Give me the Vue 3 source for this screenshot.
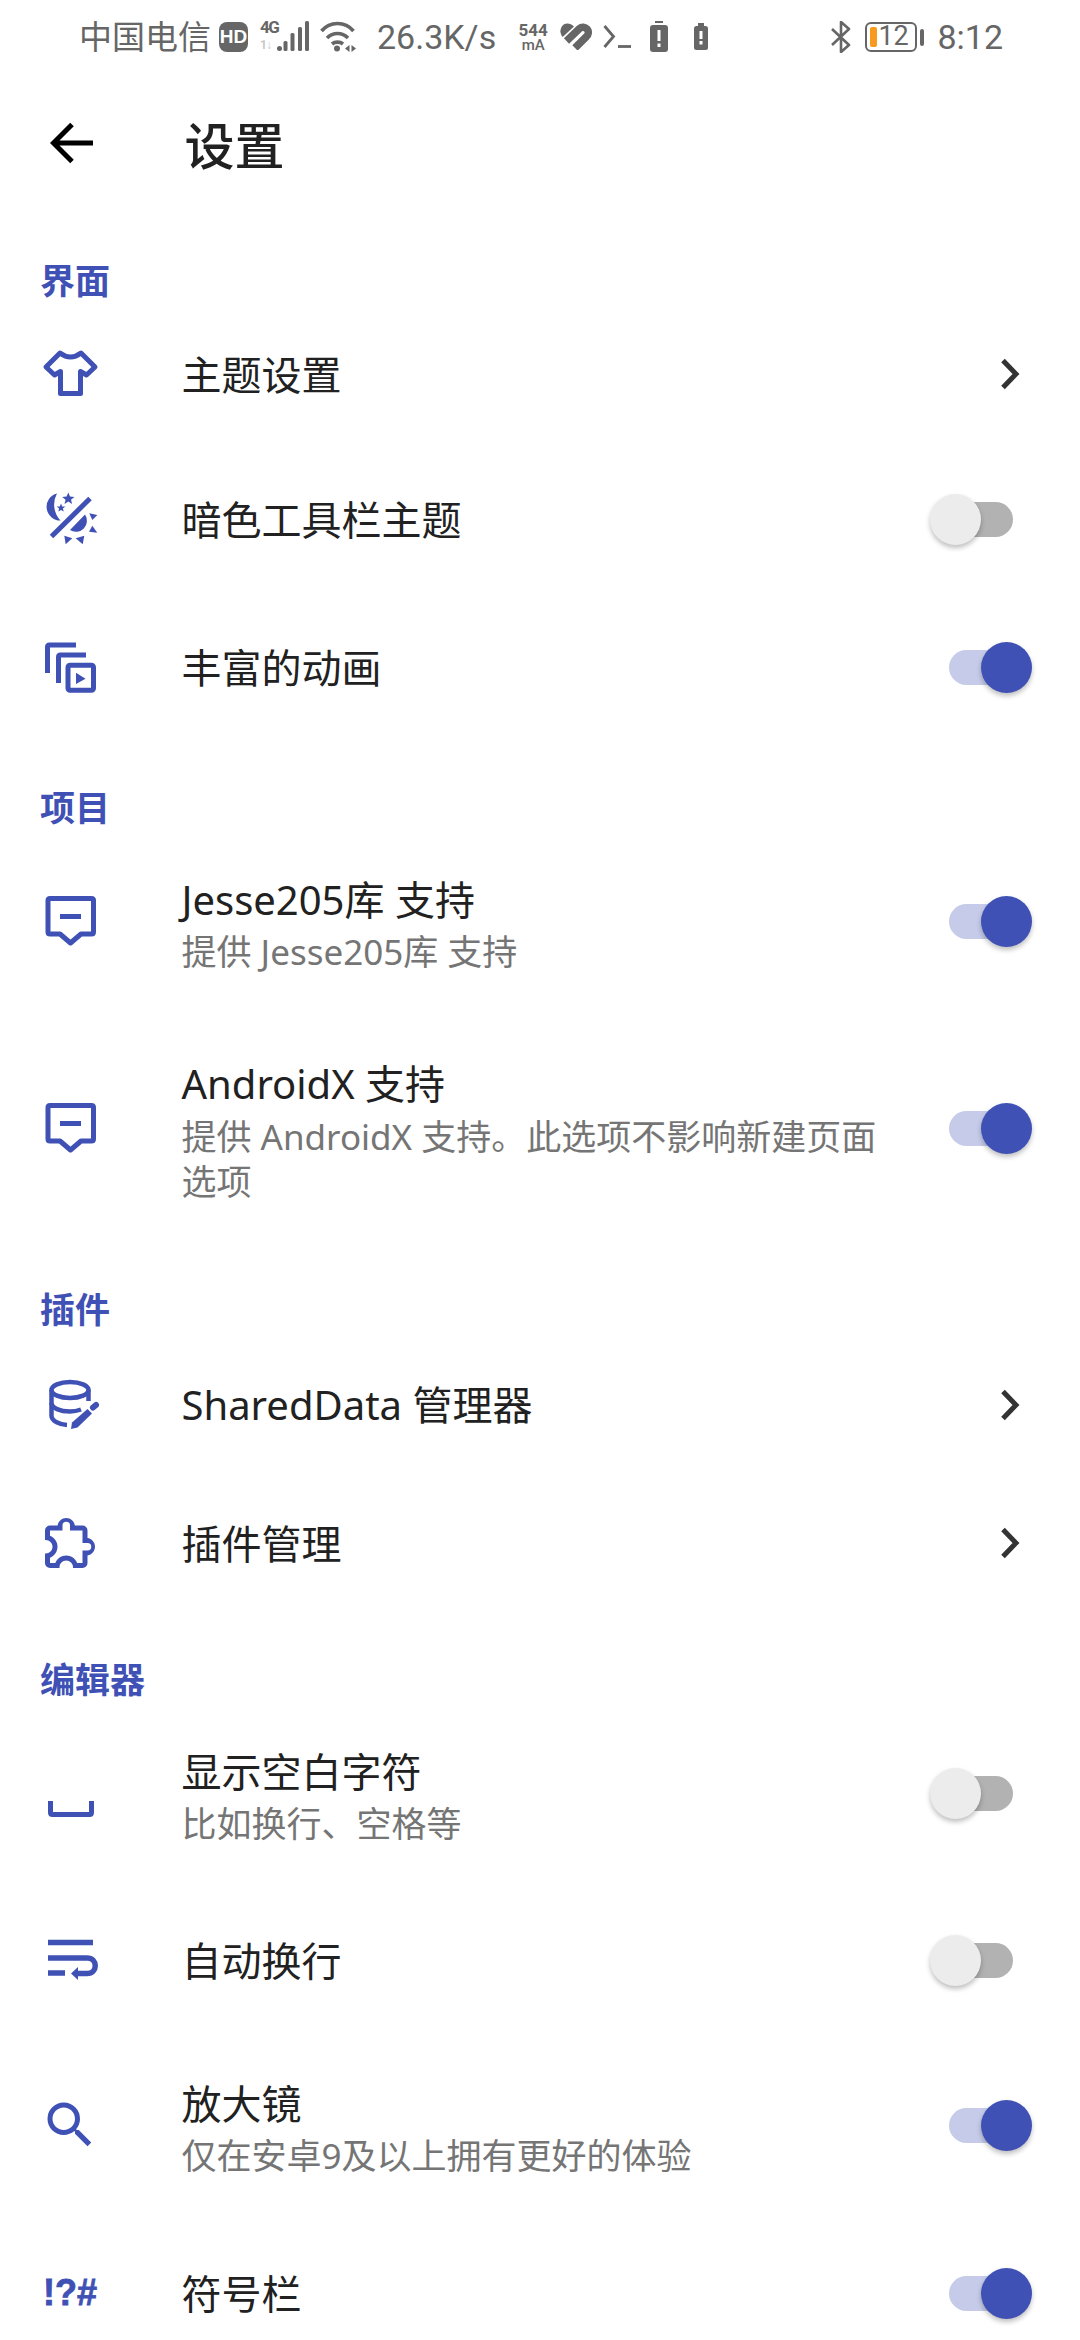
<script setup>
const sections = [
  { label: '界面', gap: 47, rows: [
    { icon: 'tee', title: '主题设置', ctl: 'chev', h: 142 },
    { icon: 'moon', title: '暗色工具栏主题', ctl: 'off', h: 148 },
    { icon: 'anim', title: '丰富的动画', ctl: 'on', h: 148 },
  ] },
  { label: '项目', gap: 45, rows: [
    { icon: 'msg', title: 'Jesse205库 支持', sub: '提供 Jesse205库 支持', ctl: 'on', h: 182 },
    { icon: 'msg', title: 'AndroidX 支持', sub: '提供 AndroidX 支持。此选项不影响新建页面选项', ctl: 'on', h: 232 },
  ] },
  { label: '插件', gap: 44, rows: [
    { icon: 'db', title: 'SharedData 管理器', ctl: 'chev', h: 145 },
    { icon: 'puzzle', title: '插件管理', ctl: 'chev', h: 132 },
  ] },
  { label: '编辑器', gap: 49, rows: [
    { icon: 'space', title: '显示空白字符', sub: '比如换行、空格等', ctl: 'off', h: 182 },
    { icon: 'wrap', title: '自动换行', ctl: 'off', h: 152 },
    { icon: 'search', title: '放大镜', sub: '仅在安卓9及以上拥有更好的体验', ctl: 'on', h: 178 },
    { icon: 'symbol', title: '符号栏', ctl: 'on', h: 158 },
  ] },
]
</script>

<template>
  <div class="page">
    <div class="status">
      <span class="carrier">中国电信</span>
      <span class="hd">HD</span>
      <div class="net">
        <span class="four">4G</span>
        <span class="one">1↓</span>
      </div>
      <svg class="s-signal" width="32" height="32" viewBox="0 0 32 32">
        <g fill="#666">
          <circle cx="2.500" cy="27.500" r="2.500" />
          <rect x="6.500" y="20" width="4" height="10" rx="1.500" />
          <rect x="13.500" y="12" width="4" height="18" rx="1.500" />
          <rect x="21" y="6" width="4" height="24" rx="1.500" />
          <rect x="28" y="0" width="4" height="30" rx="1.500" />
        </g>
      </svg>
      <svg class="s-wifi" width="37" height="32" viewBox="0 0 37 32">
        <g fill="none" stroke="#666" stroke-width="3.600">
          <path d="M1.500 10C10 0 25 0 33.500 10" />
          <path d="M7 17C13 11 22 11 28 17" />
          <path d="M12 23C15 20.500 20 20.500 23 23" />
        </g>
        <circle cx="17" cy="27.500" r="3" fill="#666" />
        <path d="M29.500 24V31L25 27.500ZM31.500 24V31L36 27.500Z" fill="#666" />
      </svg>
      <span class="speed">26.3K/s</span>
      <div class="ma">
        <span class="ma-n">544</span>
        <span class="ma-u">mA</span>
      </div>
      <svg class="s-heart" width="32" height="28" viewBox="0 0 32 28">
        <path d="M2.700 15L14 4.500C10 .5 4 .5 1.500 5-.5 9 .5 12.500 2.700 15Z" fill="#666" />
        <path d="M6.500 19L19.500 6.500A5 5 0 0 1 26.500 14.500L15 26" fill="none" stroke="#666" stroke-width="7.500" />
      </svg>
      <svg class="s-term" width="28" height="24" viewBox="0 0 28 24">
        <path d="M1.500 1l9 10.500-9 10.500" fill="none" stroke="#666" stroke-width="2.800" />
        <path d="M15 21.500h13" stroke="#666" stroke-width="2.800" />
      </svg>
      <svg class="s-bat1" width="18" height="32" viewBox="0 0 18 32">
        <rect x="5" y="0" width="8" height="2" fill="#666" />
        <rect x="0" y="4" width="18" height="27" rx="3" fill="#666" />
        <rect x="7.500" y="9" width="3" height="11" fill="#fff" />
        <rect x="7.500" y="22.500" width="3" height="3.500" fill="#fff" />
      </svg>
      <svg class="s-bat2" width="14" height="28" viewBox="0 0 14 28">
        <rect x="4" y="0" width="6" height="3" fill="#666" />
        <rect x="0" y="3" width="14" height="24" rx="2.500" fill="#666" />
        <rect x="5.500" y="8" width="3" height="8" fill="#fff" />
        <rect x="5.500" y="18" width="3" height="3.500" fill="#fff" />
      </svg>
      <div class="spacer"></div>
      <svg class="s-bt" width="20" height="32" viewBox="0 0 20 32">
        <path d="M1 8l17 16-8 7V1l8 7L1 24" fill="none" stroke="#666" stroke-width="2.600" stroke-linejoin="round" />
      </svg>
      <div class="batt">
        <span class="batt-fill"></span>
        <span class="batt-num">12</span>
      </div>
      <span class="batt-cap"></span>
      <span class="clock">8:12</span>
    </div>

    <div class="toolbar">
      <svg class="back" width="44" height="44" viewBox="0 0 44 44">
        <path d="M43 22H4M22 3.500L3.500 22 22 40.500" fill="none" stroke="#000" stroke-width="5" />
      </svg>
      <span class="title">设置</span>
    </div>

    <section v-for="s in sections" :key="s.label">
      <div class="label" :style="{ marginTop: s.gap + 'px' }">{{ s.label }}</div>
      <div v-for="r in s.rows" :key="r.title" class="row" :style="{ height: r.h + 'px' }">
        <div class="icon">
          <svg v-if="r.icon === 'tee'" width="60" height="60" viewBox="0 0 60 60">
            <path d="M20 9Q30.500 17 41 9L55 23 46.500 31 40.500 27.500V49.500H20.500V27.500L14.500 31 6 23Z" fill="none" stroke="#3f51b5" stroke-width="5" stroke-linejoin="round" />
          </svg>
          <svg v-else-if="r.icon === 'moon'" width="60" height="60" viewBox="0 0 60 60">
            <g fill="#3f51b5">
              <path d="M17 4.500A13.700 13.700 0 0 0 20.500 31.500 23 23 0 0 1 17 4.500Z" />
              <path d="M28.300 3.500l1.700 4.100 4.400.3-3.400 2.800 1.100 4.300-3.800-2.400-3.800 2.400 1.100-4.300-3.400-2.800 4.400-.3Z" />
              <path d="M21 14.500l1.200 2.900 3.100.2-2.400 2 .8 3-2.700-1.700-2.700 1.700.8-3-2.400-2 3.100-.2Z" />
              <path d="M30 41L45 25.500A11 11 0 0 1 30 41Z" />
              <path d="M49.300 24.300L57.300 26 52.300 31Z" />
              <path d="M52.300 36.700L57.300 43.700 49 42.700Z" />
              <path d="M35.700 49.300L44.300 46.700 42.700 55.300Z" />
              <path d="M24.300 46.700L32.300 49.300 25.700 55.300Z" />
            </g>
            <path d="M50 9.500L11.500 47.500" stroke="#3f51b5" stroke-width="5" />
          </svg>
          <svg v-else-if="r.icon === 'anim'" width="60" height="60" viewBox="0 0 60 60">
            <g fill="none" stroke="#3f51b5" stroke-width="5">
              <path d="M7.500 36V10Q7.500 8 9.500 8H36" />
              <path d="M18.500 46V20Q18.500 18 20.500 18H46" />
              <rect x="28" y="28.200" width="25.500" height="25" rx="2" />
            </g>
            <path d="M36 35.700L45.500 41.700 36 47Z" fill="#3f51b5" />
          </svg>
          <svg v-else-if="r.icon === 'msg'" width="60" height="60" viewBox="0 0 60 60">
            <path d="M10 7.500H51.500Q53.500 7.500 53.500 9.500V41Q53.500 43 51.500 43H41L30.500 52 20 43H10Q8 43 8 41V9.500Q8 7.500 10 7.500Z" fill="none" stroke="#3f51b5" stroke-width="5" stroke-linejoin="round" />
            <rect x="20" y="23" width="21" height="5" fill="#3f51b5" />
          </svg>
          <svg v-else-if="r.icon === 'db'" width="60" height="60" viewBox="0 0 60 60">
            <g fill="none" stroke="#3f51b5" stroke-width="4.500">
              <ellipse cx="30" cy="15" rx="18.500" ry="8" />
              <path d="M11.500 15V41C11.500 46 20 49.500 27 50" />
              <path d="M11.500 28C11.500 33 20 36.500 30 36.500 34 36.500 37 36 41 34.500" />
              <path d="M48.500 15V26" />
            </g>
            <path d="M31 54l1-6.500L47.500 34l4.500 4.500L37.500 52.500Z" fill="#3f51b5" />
            <path d="M53 32.500l3 -2.500" stroke="#3f51b5" stroke-width="6" stroke-linecap="round" />
          </svg>
          <svg v-else-if="r.icon === 'puzzle'" width="60" height="60" viewBox="0 0 24 24">
            <path fill="#3f51b5" d="M22,13.5C22,15.26 20.7,16.72 19,16.96V20A2,2 0 0,1 17,22H13.2V21.7A2.7,2.7 0 0,0 10.5,19C9,19 7.8,20.21 7.8,21.7V22H4A2,2 0 0,1 2,20V16.2H2.3C3.79,16.2 5,15 5,13.5C5,12 3.79,10.8 2.3,10.8H2V7A2,2 0 0,1 4,5H7.04C7.28,3.3 8.74,2 10.5,2C12.26,2 13.72,3.3 13.96,5H17A2,2 0 0,1 19,7V10.04C20.7,10.28 22,11.74 22,13.5M17,15H19A1.5,1.5 0 0,0 20.5,13.5A1.5,1.5 0 0,0 19,12H17V7H12V5A1.5,1.5 0 0,0 10.5,3.5A1.5,1.5 0 0,0 9,5V7H4V9.12C5.76,9.8 7,11.5 7,13.5C7,15.5 5.75,17.2 4,17.88V20H6.12C6.8,18.25 8.5,17 10.5,17C12.5,17 14.2,18.25 14.88,20H17V15Z" />
          </svg>
          <svg v-else-if="r.icon === 'space'" width="60" height="60" viewBox="0 0 60 60">
            <path d="M10.500 38V49.500Q10.500 51.500 12.500 51.500H49.500Q51.500 51.500 51.500 49.500V38" fill="none" stroke="#3f51b5" stroke-width="5" />
          </svg>
          <svg v-else-if="r.icon === 'wrap'" width="60" height="60" viewBox="0 0 60 60">
            <g fill="none" stroke="#3f51b5" stroke-width="5.500">
              <path d="M8 12.500H53" />
              <path d="M8 28H47C58 28 58 43.500 47 43.500H35" />
              <path d="M8 43H25" />
            </g>
            <path d="M31 43.500L38 37V50Z" fill="#3f51b5" />
          </svg>
          <svg v-else-if="r.icon === 'search'" width="60" height="60" viewBox="0 0 24 24">
            <path fill="#3f51b5" d="M9.5,3A6.5,6.5 0 0,1 16,9.5C16,11.11 15.41,12.59 14.44,13.73L14.71,14H15.5L20.5,19L19,20.5L14,15.5V14.71L13.73,14.44C12.59,15.41 11.11,16 9.5,16A6.5,6.5 0 0,1 3,9.5A6.5,6.5 0 0,1 9.5,3M9.5,5C7,5 5,7 5,9.5C5,12 7,14 9.5,14C12,14 14,12 14,9.5C14,7 12,5 9.5,5Z" />
          </svg>
          <span v-else class="sym">!?#</span>
        </div>
        <div class="text" :class="{ two: r.sub }">
          <div class="t">{{ r.title }}</div>
          <div v-if="r.sub" class="sub">{{ r.sub }}</div>
        </div>
        <div class="ctl">
          <svg v-if="r.ctl === 'chev'" class="chev" width="22" height="32" viewBox="0 0 22 32">
            <path d="M3 2.500L16 16 3 29.500" fill="none" stroke="#333" stroke-width="5" />
          </svg>
          <div v-else class="switch" :class="r.ctl">
            <span class="thumb"></span>
          </div>
        </div>
      </div>
    </section>
  </div>
</template>

<style scoped>
.page {
  width: 1080px;
  height: 2340px;
  overflow: hidden;
  background: #fff;
  font-family: "Noto Sans", "Noto Sans CJK SC", sans-serif;
  color: #212121;
}
.status {
  height: 74px;
  display: flex;
  align-items: center;
  padding: 0 77px 0 79px;
  color: #666;
}
.carrier { font-size: 33px; line-height: 40px; }
.hd {
  width: 29px; height: 30px; margin-left: 8px;
  background: #666; color: #fff; border-radius: 8px;
  font: 700 19px/30px "Liberation Sans", sans-serif; text-align: center;
}
.net { width: 17px; margin-left: 12px; margin-top: -2px; display: flex; flex-direction: column; gap: 6px; }
.four { font: 700 17px/13px "Roboto", sans-serif; color: #666; letter-spacing: -1.5px; white-space: nowrap; }
.one { font: 700 12px/11px "Roboto", sans-serif; color: #c8c8c8; letter-spacing: -1px; white-space: nowrap; }
.s-wifi { margin-left: 11px; }
.speed { font: 400 34px/40px "Roboto", sans-serif; margin-left: 20px; }
.ma { margin-left: 22px; width: 30px; display: flex; flex-direction: column; align-items: center; }
.ma-n { font: 700 17px/16px "Roboto", sans-serif; }
.ma-u { font: 500 15px/15px "Roboto", sans-serif; }
.s-heart { margin-left: 12px; margin-top: -2px; }
.s-term { margin-left: 11px; }
.s-bat1 { margin-left: 19px; }
.s-bat2 { margin-left: 26px; }
.spacer { flex: 1; }
.s-bt { margin-right: 14px; }
.batt {
  position: relative; width: 52px; height: 30px;
  box-sizing: border-box; border: 2.5px solid #666; border-radius: 6px;
}
.batt-fill {
  position: absolute; left: 3px; top: 2.500px; width: 7px; height: 20px;
  background: #f89a1f; border-radius: 2px;
}
.batt-num {
  position: absolute; left: 11px; top: 0; font: 400 27px/25px "Roboto", sans-serif; color: #666;
}
.batt-cap { width: 4px; height: 17px; background: #666; margin-left: 3px; border-radius: 2px; }
.clock { font: 400 34px/40px "Roboto", sans-serif; margin-left: 13px; }

.toolbar { height: 138px; display: flex; align-items: center; padding-left: 50px; }
.back { flex: none; }
.title { font-size: 50px; font-weight: 500; margin-left: 90.5px; color: #212121; }

.label {
  height: 44px; line-height: 44px; padding-left: 40px;
  font-size: 35px; font-weight: 700; color: #3f51b5;
}
.row { display: flex; align-items: center; padding-left: 40px; }
.icon { width: 60px; height: 60px; flex: none; display: flex; align-items: center; justify-content: center; }
.icon svg { display: block; }
.sym { font: 700 36px/60px "Liberation Sans", sans-serif; color: #3f51b5; -webkit-text-stroke: .8px #3f51b5; }
.text { flex: 1; margin-left: 81.5px; min-width: 0; padding-top: 1.5px; }
.text.two { padding-top: 6px; }
.t { font-size: 40px; line-height: 52px; color: #212121; }
.sub { font-size: 35px; line-height: 45px; color: #757575; margin: 3.5px 10px 0 0; }
.ctl { flex: none; width: 125px; height: 60px; margin-right: 40px; position: relative; display: flex; align-items: center; }
.chev { position: absolute; left: 85px; top: 14px; }
.switch { position: absolute; left: 34px; top: 12.500px; width: 64px; height: 35px; border-radius: 18px; }
.switch.off { background: #b2b2b2; }
.switch.on { background: #c5cbe9; }
.thumb {
  position: absolute; top: -8px; width: 51px; height: 51px; border-radius: 50%;
  box-shadow: 0 3px 5px rgba(0, 0, 0, .25);
}
.off .thumb { left: -19.5px; background: #ececec; }
.on .thumb { left: 31.5px; background: #3f51b5; }
</style>
